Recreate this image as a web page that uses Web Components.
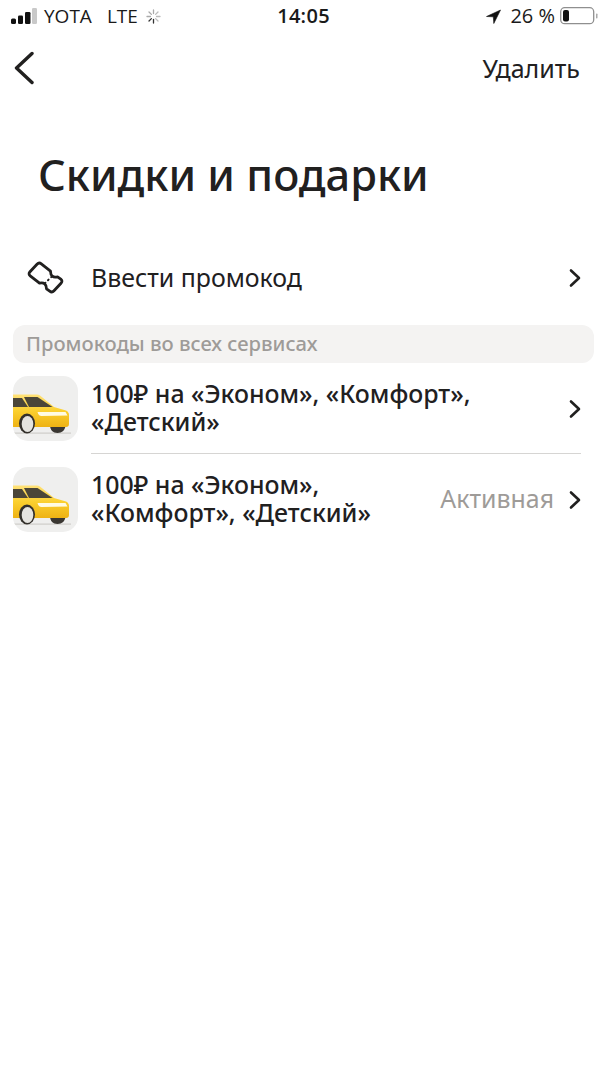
<!DOCTYPE html>
<html lang="ru"><head><meta charset="utf-8"><title>Скидки и подарки</title>
<style>html,body{margin:0;background:#fff}body{width:607px;height:1080px;overflow:hidden;font-family:"Noto Sans","Open Sans",sans-serif;color:#21201f}</style>
</head><body>
<status-bar></status-bar>
<nav-bar></nav-bar>
<page-title>Скидки и подарки</page-title>
<promo-row></promo-row>
<section-head>Промокоды во всех сервисах</section-head>
<offer-row divider first><span>100₽ на «Эконом», «Комфорт»,<br>«Детский»</span></offer-row>
<offer-row status="Активная"><span>100₽ на «Эконом»,<br>«Комфорт», «Детский»</span></offer-row>
<script>
const chev=`<svg width="12" height="20" viewBox="0 0 12 20" fill="none" style="display:block;flex:none"><path d="M2 2.500 10 10 2 17.500" stroke="#21201f" stroke-width="2.600" stroke-linecap="round" stroke-linejoin="round"/></svg>`;
function def(name,html){customElements.define(name,class extends HTMLElement{constructor(){super();this.attachShadow({mode:'open'}).innerHTML=typeof html==='function'?html(this):html}})}
def('status-bar',`<style>
:host{display:flex;align-items:center;height:32px;padding:0 8px;font:19px/20px "Open Sans","Noto Sans",sans-serif;color:#1a1a1a;box-sizing:border-box}
.l,.r{display:flex;align-items:center}.l{flex:1}.r{flex:1;justify-content:flex-end}
.t{font-weight:600;font-size:20px;letter-spacing:.3px}
</style>
<div class="l"><svg style="margin-left:2px" width="28" height="18" viewBox="0 0 28 18"><rect x="1" y="11.500" width="5" height="5.500" rx="1.500" fill="#111"/><rect x="8" y="8.500" width="5" height="8.500" rx="1.300" fill="#111"/><rect x="15" y="5" width="5.500" height="12" rx="1.300" fill="#111"/><rect x="22" y="1" width="5" height="16" rx="1.300" fill="#c9c9c9"/></svg>
<span style="margin-left:6px;">YOTA</span><span style="margin-left:15px">LTE</span>
<svg style="margin-left:7px" width="17" height="17" viewBox="0 0 17 17" stroke-width="1.300" stroke-linecap="round"><g stroke="#333"><path d="M8.500 11.500v3.500"/><path d="M6.400 10.600l-2.400 2.400" /></g><g stroke="#aaa"><path d="M5.500 8.500H2M6.400 6.400 4 4M8.500 5.500V2"/></g><g stroke="#bbb"><path d="M10.600 6.400 13 4M11.500 8.500H15M10.600 10.600 13 13"/></g></svg></div>
<div class="t">14:05</div>
<div class="r"><svg width="15" height="15" viewBox="0 0 15 15"><path d="M14.500 1 .5 7.500l6.800.3.500 6.700z" fill="#111" stroke="#111" stroke-width=".6" stroke-linejoin="round"/></svg>
<span style="margin-left:9px;font-size:20px">26 %</span>
<svg style="margin-left:5px" width="39" height="18" viewBox="0 0 39 18"><rect x=".7" y=".7" width="33" height="16" rx="4" fill="none" stroke="#8f8f8f" stroke-width="1.300"/><rect x="3" y="3" width="6" height="11.500" rx="2" fill="#111"/><rect x="36" y="6.500" width="1.500" height="5" rx=".7" fill="#aaa"/></svg></div>`);
def('nav-bar',`<style>
:host{display:flex;align-items:center;justify-content:space-between;height:71px;padding:0 27px 0 14px;box-sizing:border-box;font:25px/30px "Noto Sans",sans-serif;color:#21201f}
svg{display:block}</style>
<svg width="20" height="34" viewBox="0 0 20 34" fill="none"><path d="M18 2.500 2.500 17 18 31.500" stroke="#21201f" stroke-width="3.400" stroke-linecap="round" stroke-linejoin="round"/></svg><span>Удалить</span>`);
def('page-title',`<style>:host{display:block;padding:44px 0 0 38px;height:100px;box-sizing:border-box;font:500 43.400px/56px "Noto Sans",sans-serif;color:#21201f}</style><slot></slot>`);
def('promo-row',`<style>:host{display:flex;align-items:center;height:94px;margin-top:28px;padding:0 26px 0 22px;font:24.900px/30px "Noto Sans",sans-serif}
svg{display:block;flex:none}span{flex:1;margin-left:21px;padding-bottom:2px}</style>
<svg width="48" height="46" viewBox="0 0 48 46" fill="none"><path d="M15 9.200Q17 7 19.300 8.800L28.500 16.200Q28.600 23.300 35.500 21.800L38.800 24.200Q41 26 39 28.200L32 35.800Q30 38 27.700 36.200L24.500 33.800Q24.400 26.700 17.500 28.200L8.200 20.800Q6 19 8 16.800Z" stroke="#21201f" stroke-width="2.800" stroke-linejoin="round"/><path d="M22.800 28.300l.6-.6M26 25.200l.6-.6M29.200 22.100l.6-.6" stroke="#21201f" stroke-width="2" stroke-linecap="round"/></svg>
<span>Ввести промокод</span>${chev}`);
def('section-head',`<style>:host{display:flex;align-items:center;height:38px;margin:0 13px;padding-left:13px;background:#f4f3f2;border-radius:12px;font:500 20.200px/24px "Noto Sans",sans-serif;color:#9e9b98}span{padding-bottom:2px}</style><span><slot></slot></span>`);
const car=`<svg width="65" height="65" viewBox="0 0 65 65" style="display:block;flex:none"><defs><linearGradient id="b" x1="0" y1="0" x2="0" y2="1"><stop offset="0" stop-color="#ffe27a"/><stop offset=".5" stop-color="#fbd02f"/><stop offset="1" stop-color="#eeb214"/></linearGradient><clipPath id="c"><rect width="65" height="65" rx="15"/></clipPath></defs>
<g clip-path="url(#c)"><rect width="65" height="65" fill="#efefee"/>
<rect x="0" y="56.500" width="58" height="1.200" fill="#cfcdc9"/>
<path d="M38 50a7.500 7 0 0 0 14.500 0z M37 49c0 5 3 8 7.500 8s8-3 8-8z" fill="#3a3732"/>
<path d="M0 51h53c2 0 3-1 3-3V39q0-3-3-4.500L41 31 27 19.500Q25.500 18.500 24 18.500H0z" fill="url(#b)"/>
<path d="M0 22h9l6 9H0z" fill="#4b4638"/><path d="M11 21h13.500l15 10H16z" fill="#4b4638"/>
<path d="M24 36h28.500l2 3.500-26 .5q-3 0-4-4z" fill="#fffbe3"/>
<ellipse cx="14" cy="47.500" rx="8" ry="10" fill="#33302b"/><ellipse cx="14.500" cy="48" rx="5.800" ry="8" fill="#e4e3df"/></g></svg>`;
def('offer-row',t=>`<style>:host{display:flex;align-items:center;height:91px;box-sizing:border-box;padding:0 26px 0 13px;position:relative;font:500 24.900px/28px "Noto Sans",sans-serif;color:#21201f}
.tx{flex:1;margin-left:13px;padding-bottom:4px}.st{font-weight:400;color:#9e9b98;margin-right:15px;padding-bottom:4px}
:host([divider])::after{content:"";position:absolute;left:91px;right:26px;bottom:0;height:1px;background:#d6d5d3}</style>
${car}<div class="tx"><slot></slot></div>${t.getAttribute('status')?`<span class="st">${t.getAttribute('status')}</span>`:''}${chev}`);
</script>
</body></html>
